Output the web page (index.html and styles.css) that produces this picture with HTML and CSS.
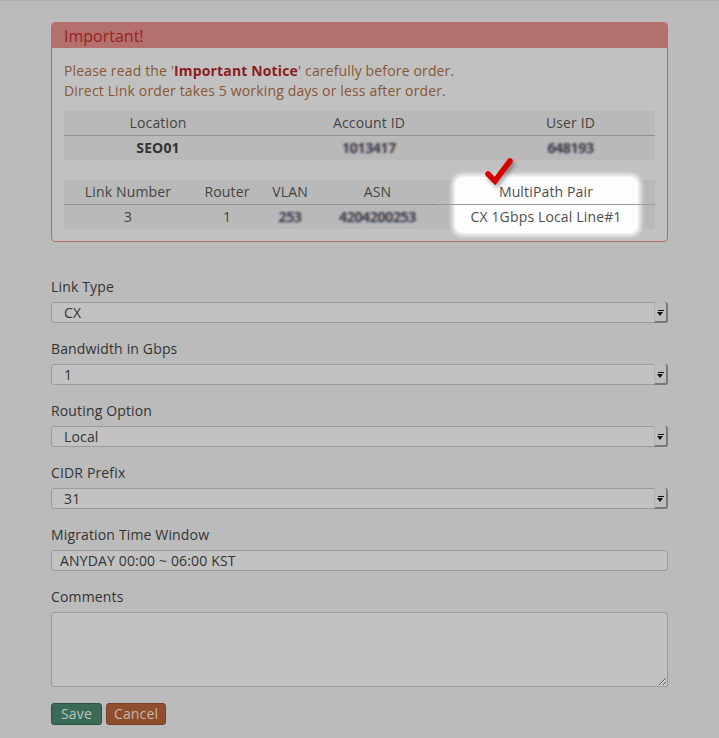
FILE: index.html
```html
<!DOCTYPE html>
<html>
<head>
<meta charset="utf-8">
<link rel="stylesheet" href="styles.css">
</head>
<body>
<div class="page">
  <div class="alert">
    <div class="alert-head">Important!</div>
    <div class="alert-body">
      <p>Please read the '<b>Important Notice</b>' carefully before order.</p>
      <p>Direct Link order takes 5 working days or less after order.</p>

      <div class="grid t1">
        <div class="col w188"><div class="cell h">Location</div><div class="cell d"><b class="strong">SEO01</b></div></div>
        <div class="col w234"><div class="cell h">Account ID</div><div class="cell d"><span class="blur">1013417</span></div></div>
        <div class="col w169"><div class="cell h">User ID</div><div class="cell d"><span class="blur">648193</span></div></div>
      </div>

      <div class="grid t2">
        <div class="col w128"><div class="cell h">Link Number</div><div class="cell d">3</div></div>
        <div class="col w70"><div class="cell h">Router</div><div class="cell d">1</div></div>
        <div class="col w56"><div class="cell h">VLAN</div><div class="cell d"><span class="blur">253</span></div></div>
        <div class="col w119"><div class="cell h">ASN</div><div class="cell d"><span class="blur">4204200253</span></div></div>
        <div class="col w218 spot-col">
          <div class="spot"></div>
          <svg class="check" width="32" height="32" viewBox="0 0 32 32"><path d="M5 18 L12 25 L27 5" fill="none" stroke="#d60000" stroke-width="5.5" stroke-linecap="round" stroke-linejoin="miter"/></svg>
          <div class="cell h">MultiPath Pair</div>
          <div class="cell d">CX 1Gbps Local Line#1</div>
        </div>
      </div>
    </div>
  </div>

  <form class="form">
    <div class="group">
      <label class="lbl">Link Type</label>
      <div class="select"><select class="ctrl"><option>CX</option></select></div>
    </div>
    <div class="group">
      <label class="lbl">Bandwidth in Gbps</label>
      <div class="select"><select class="ctrl"><option>1</option></select></div>
    </div>
    <div class="group">
      <label class="lbl">Routing Option</label>
      <div class="select"><select class="ctrl"><option>Local</option></select></div>
    </div>
    <div class="group">
      <label class="lbl">CIDR Prefix</label>
      <div class="select"><select class="ctrl"><option>31</option></select></div>
    </div>
    <div class="group">
      <label class="lbl">Migration Time Window</label>
      <input class="ctrl input" type="text" value="ANYDAY 00:00 ~ 06:00 KST">
    </div>
    <div class="group">
      <label class="lbl">Comments</label>
      <textarea class="ctrl area"></textarea>
    </div>
    <div class="buttons">
      <button type="button" class="btn save">Save</button>
      <button type="button" class="btn cancel">Cancel</button>
    </div>
  </form>
</div>
</body>
</html>
```
FILE: styles.css
```css
html, body {
  margin: 0;
  padding: 0;
}
body {
  background: #bbbbbb;
  border-top: 1px solid #acacac;
  font-family: "Open Sans", "DejaVu Sans", sans-serif;
  font-size: 14px;
  letter-spacing: 0.15px;
  color: #353535;
}
.page {
  width: 617px;
  margin-left: 51px;
  padding-top: 21px;
}
.alert {
  border: 1px solid #b36e6b;
  border-radius: 4px;
  background: #c1c1c1;
}
.alert-head {
  background: #b3706d;
  height: 25px;
  line-height: 26px;
  padding-left: 12px;
  color: #98221e;
  font-size: 16px;
  letter-spacing: 0;
  border-radius: 3px 3px 0 0;
}
.alert-body {
  padding: 13px 12px 12px;
  color: #8a5634;
  line-height: 20px;
}
.alert-body p {
  margin: 0;
}
.alert-body p b {
  color: #8a1d1b;
}
.grid {
  display: flex;
  background: #b9b9b9;
}
.t1 { margin-top: 10px; }
.t2 { margin-top: 20px; }
.col {
  display: flex;
  flex-direction: column;
}
.w188 { width: 188px; }
.w234 { width: 234px; }
.w169 { width: 169px; }
.w128 { width: 128px; }
.w70 { width: 70px; }
.w56 { width: 56px; }
.w119 { width: 119px; }
.w218 { width: 218px; }
.cell {
  height: 24px;
  line-height: 24px;
  text-align: center;
  color: #444;
}
.cell.h {
  border-bottom: 1px solid #8e8e8e;
}
.strong {
  color: #333;
  font-weight: 700;
}
.blur {
  display: inline-block;
  color: #2a3550;
  font-weight: 600;
  filter: blur(0.8px);
  letter-spacing: -0.3px;
  text-shadow: 1px 0 0 rgba(190, 120, 60, 0.7), -1px 1px 0 rgba(120, 140, 190, 0.5);
}
.spot-col {
  position: relative;
}
.spot-col .cell {
  position: relative;
  z-index: 1;
  color: #4e4e4e;
}
.spot-col .cell.h {
  border-bottom-color: #9c9c9c;
}
.spot {
  position: absolute;
  top: -3px;
  bottom: -4px;
  left: 18px;
  right: 17px;
  background: #fdfdfd;
  border-radius: 8px;
  box-shadow: 0 0 4px 3px rgba(255, 255, 255, 0.85);
  z-index: 0;
}
.check {
  position: absolute;
  left: 46px;
  top: -24px;
  z-index: 2;
  filter: drop-shadow(2px 3px 2px rgba(0, 0, 0, 0.35));
}
.form {
  margin-top: 35px;
}
.group {
  margin-bottom: 16px;
}
.lbl {
  display: block;
  line-height: 20px;
  margin-bottom: 5px;
  color: #333;
}
.ctrl {
  display: block;
  box-sizing: border-box;
  width: 617px;
  height: 21px;
  margin: 0;
  border: 1px solid #9b9b9b;
  border-radius: 3px;
  background: #c2c2c2;
  font-family: "Open Sans", "DejaVu Sans", sans-serif;
  font-size: 14px;
  letter-spacing: 0.15px;
  color: #333;
  outline: none;
}
.select {
  position: relative;
}
.select select {
  -webkit-appearance: none;
  appearance: none;
  padding: 0 12px;
  line-height: 19px;
}
.select::before {
  content: "";
  position: absolute;
  right: 0;
  top: 0;
  width: 14px;
  height: 21px;
  box-sizing: border-box;
  border-right: 2px solid #7a7a7a;
  border-bottom: 2px solid #7a7a7a;
  border-left: 1px solid #b0b0b0;
  border-radius: 0 3px 3px 0;
  background: linear-gradient(#111, #111) 3px 8px / 6px 1px no-repeat, #bdbdbd;
  pointer-events: none;
}
.select::after {
  content: "";
  position: absolute;
  right: 5px;
  top: 10px;
  width: 0;
  height: 0;
  border-left: 3px solid transparent;
  border-right: 3px solid transparent;
  border-top: 4px solid #111;
  pointer-events: none;
}
.input {
  padding: 0 8px;
}
.area {
  height: 75px;
  resize: both;
  padding: 4px 8px;
}
.buttons {
  display: flex;
  gap: 4px;
}
.btn {
  height: 22px;
  box-sizing: border-box;
  padding: 0 9px;
  border-radius: 3px;
  font-family: "Open Sans", "DejaVu Sans", sans-serif;
  font-size: 14px;
  line-height: 18px;
  letter-spacing: 0.15px;
  cursor: pointer;
}
.save {
  background: #3b6a57;
  border: 1px solid #2c5243;
  color: #b9c4bf;
}
.cancel {
  background: #8e4f2f;
  border: 1px solid #7a4024;
  color: #cbb6aa;
  padding: 0 7px;
}
```
